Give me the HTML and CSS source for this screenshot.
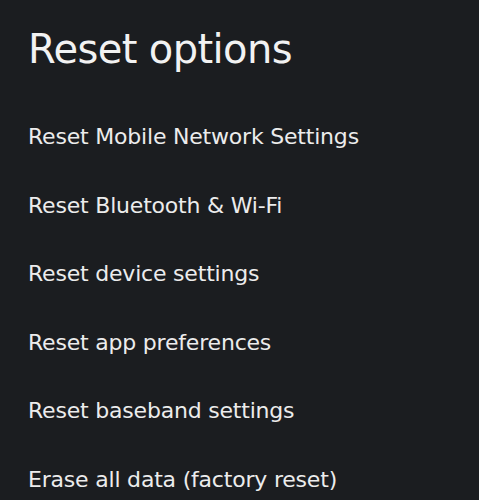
FILE: index.html
```html
<!DOCTYPE html>
<html>
<head>
<meta charset="utf-8">
<link rel="stylesheet" href="styles.css">
</head>
<body>
<div class="screen">
  <h1 class="title">Reset options</h1>
  <ul class="options">
    <li class="option">Reset Mobile Network Settings</li>
    <li class="option">Reset Bluetooth &amp; Wi-Fi</li>
    <li class="option">Reset device settings</li>
    <li class="option">Reset app preferences</li>
    <li class="option">Reset baseband settings</li>
    <li class="option">Erase all data (factory reset)</li>
  </ul>
</div>
</body>
</html>
```
FILE: styles.css
```css
html, body {
  margin: 0;
  padding: 0;
  background: #1b1d20;
}
.screen {
  width: 479px;
  height: 500px;
  overflow: hidden;
  background: #1b1d20;
  color: #ececec;
  font-family: "DejaVu Sans", sans-serif;
  padding-left: 28px;
  box-sizing: border-box;
}
.title {
  margin: 0;
  padding-top: 23px;
  font-size: 40px;
  font-weight: normal;
  line-height: 52px;
  letter-spacing: -0.6px;
  color: #f2f2f2;
}
.options {
  list-style: none;
  margin: 0;
  padding: 0;
  padding-top: 28px;
}
.option {
  font-size: 22px;
  line-height: 68.5px;
  height: 68.5px;
  letter-spacing: -0.2px;
}
```
